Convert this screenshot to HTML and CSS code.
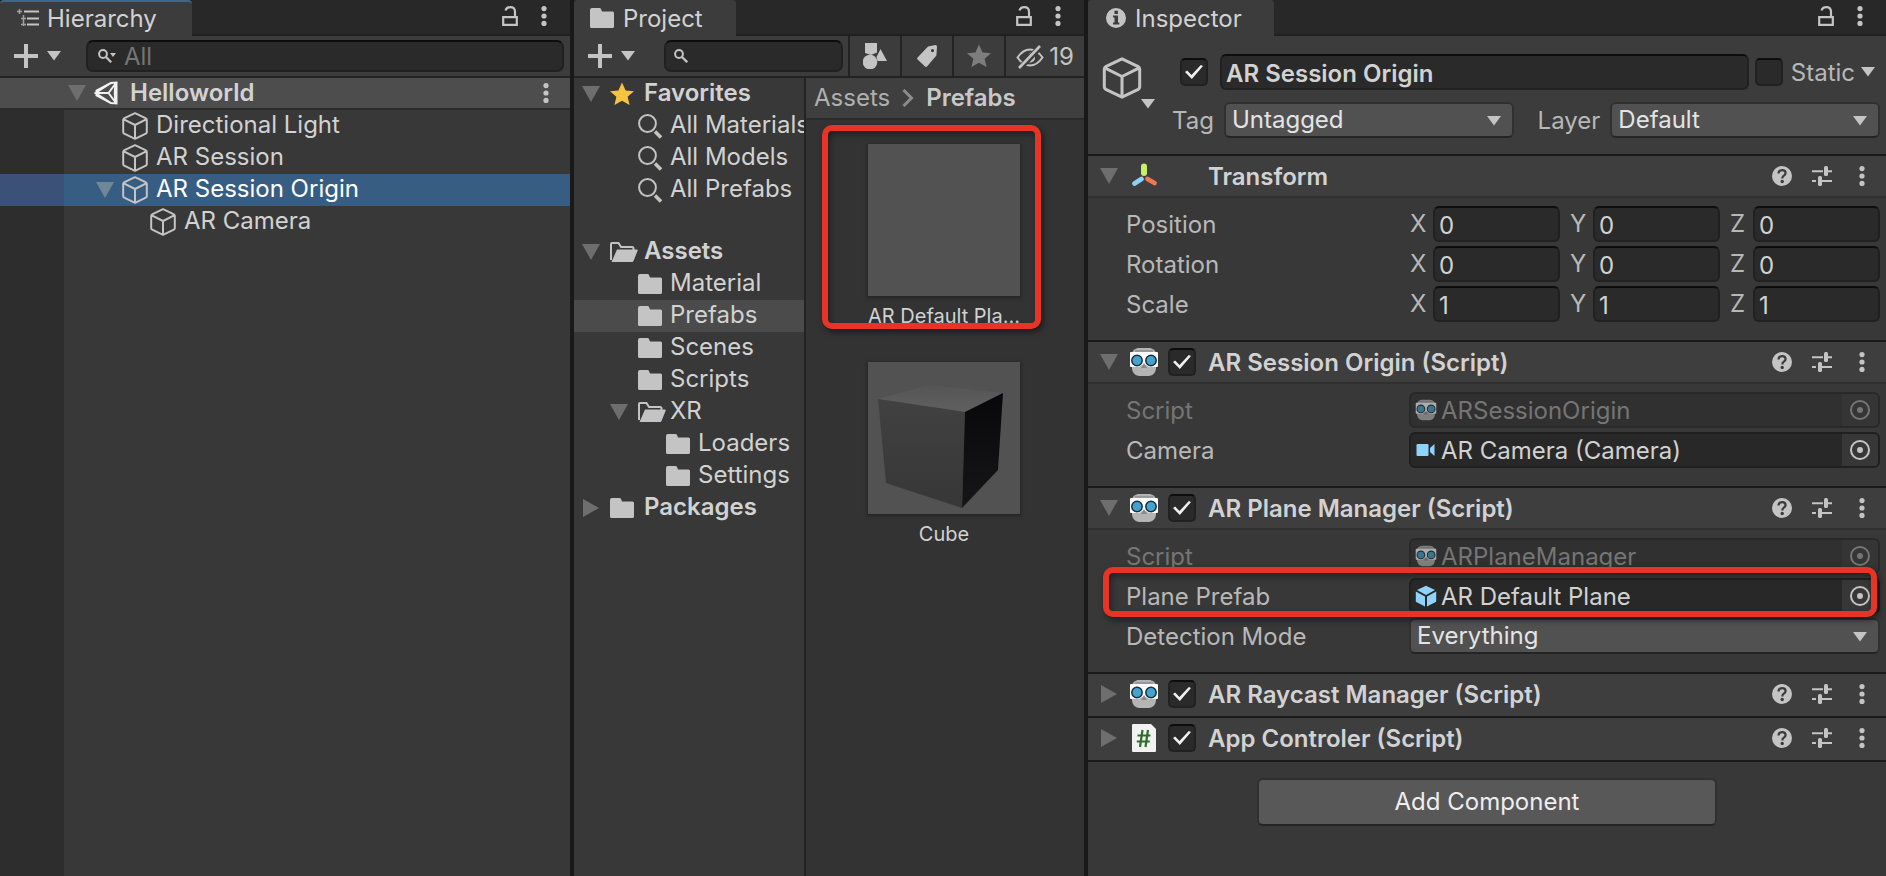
FILE: index.html
```html
<!DOCTYPE html>
<html lang="en">
<head>
<meta charset="utf-8">
<title>Helloworld - Editor</title>
<link rel="stylesheet" href="styles.css">
</head>
<body>
<svg class="sprite" aria-hidden="true">
  <symbol id="lock" viewBox="0 0 16 20"><path d="M1.2 11.2h13.600v7.600H1.200zM3.500 4.600C4 2.600 5.500 1.200 8.300 1.200c3 0 4.700 1.700 4.700 4.500v5.500" fill="none" stroke="currentColor" stroke-width="2.200"/></symbol>
  <symbol id="kebab" viewBox="0 0 6 20"><circle cx="3" cy="2.600" r="2.600"/><circle cx="3" cy="10" r="2.600"/><circle cx="3" cy="17.400" r="2.600"/></symbol>
  <symbol id="plus" viewBox="0 0 24 24"><path d="M10 0h4v10h10v4H14v10h-4V14H0v-4h10z"/></symbol>
  <symbol id="drop" viewBox="0 0 14 10"><path d="M0 0h14L7 9.500z"/></symbol>
  <symbol id="down" viewBox="0 0 18 18"><path d="M0 1h18L9 17z"/></symbol>
  <symbol id="right" viewBox="0 0 18 18"><path d="M1 0v18l16-9z"/></symbol>
  <symbol id="list" viewBox="0 0 22 18"><path d="M2.500 0v5M0 2.500h5M6.500 6v11M4 9.500h5M4 15.500h5" fill="none" stroke="currentColor" stroke-width="1.500" opacity=".75"/><path d="M7 1.500h15v2H7zM10 8.500h12v2H10zM10 14.500h12v2H10z"/></symbol>
  <symbol id="find" viewBox="0 0 14 14"><circle cx="5" cy="5" r="3.900" fill="none" stroke="currentColor" stroke-width="2"/><path d="M8 8l5.200 5.200" stroke="currentColor" stroke-width="2.300"/></symbol>
  <symbol id="finddrop" viewBox="0 0 18 14"><circle cx="5" cy="5" r="3.900" fill="none" stroke="currentColor" stroke-width="2"/><path d="M8 8l5.200 5.200" stroke="currentColor" stroke-width="2.300"/><path d="M12 4h6l-3 4z"/></symbol>
  <symbol id="query" viewBox="0 0 28 28"><circle cx="9.500" cy="11.500" r="8.400" fill="none" stroke="currentColor" stroke-width="2"/><path d="M17 19.500l6 6" stroke="currentColor" stroke-width="3.600"/></symbol>
  <symbol id="cube" viewBox="0 0 26 28"><path d="M13 1.200L23.500 6.200Q24.800 7 24.800 8v12q0 1-1 1.600L13 26.800 2.200 21.600q-1-.6-1-1.600V8q0-1 1.300-1.800zM1.800 7.400L13 13l11.200-5.600M13 13v13.500" fill="none" stroke="currentColor" stroke-width="2" stroke-linejoin="round"/></symbol>
  <symbol id="scene" viewBox="0 0 24 24"><path d="M17 2L2.500 9.500v5L17 22M1.500 12L17 2l5.500-.5v21L17 22zM2 12h12.500M14.500 12L22 2M14.500 12L22 22M22 2q-2.500 10 0 20" fill="none" stroke="#f2f2f2" stroke-width="2"/></symbol>
  <symbol id="folder" viewBox="0 0 28 28"><path d="M2 4h7.500q1 0 1.500 1l1 2.500h10.500q1.500 0 1.500 1.500v13.500q0 1.500-1.500 1.500H1.500Q0 24 0 22.500V6q0-2 2-2z"/></symbol>
  <symbol id="openfolder" viewBox="0 0 28 28"><path d="M1 22V6q0-1 1-1h6.500l2.500 4h11q1.500 0 1.500 1.500v2" fill="none" stroke="currentColor" stroke-width="2"/><path d="M7 11.500h20q1 0 .6 1.200l-4 10q-.5 1.300-1.600 1.300H1.500z"/></symbol>
  <symbol id="star" viewBox="0 0 28 28"><path d="M12 2.500l3.600 7.900 8.400.8-6.400 5.600 2 8.200L12 20.700 4.400 25l2-8.200L0 11.200l8.400-.8z"/></symbol>
  <symbol id="shapes" viewBox="0 0 24 26"><path d="M2 0h12v9.500L8 12 2 10zM17.500 6L24 18h-9.500l-1-4z"/><circle cx="7" cy="19" r="7.300"/></symbol>
  <symbol id="tag" viewBox="0 0 20 22"><path d="M11 1.500L18.500 0Q20 0 20 2l-.6 8.500L10 21.500q-1 .8-2 0L.6 14.500q-1-1 0-2zM15.500 4a1.600 1.600 0 1 0 0 3.200 1.600 1.600 0 0 0 0-3.200z" fill-rule="evenodd"/></symbol>
  <symbol id="eye" viewBox="0 0 28 24"><path d="M1.500 12.500Q7 4.500 14 4.500t12.500 8Q21 20.500 14 20.500T1.500 12.500z" fill="none" stroke="currentColor" stroke-width="2"/><path d="M14 7.500a5 5 0 0 1 5 5 5 5 0 0 1-9 3z"/><path d="M3.500 23.500L24 2" stroke="#3c3c3c" stroke-width="6"/><path d="M3 23L24 1" stroke="currentColor" stroke-width="2.600"/></symbol>
  <symbol id="info" viewBox="0 0 20 20"><circle cx="10" cy="10" r="10"/><path d="M8.500 2.800h3.400V6H8.500zM7 7.500h5v7h1.300v2H7v-2h1.500v-5H7z" fill="#3c3c3c"/></symbol>
  <symbol id="help" viewBox="0 0 20 20"><circle cx="10" cy="10" r="10"/><path d="M6.500 7.500q0-3.300 3.600-3.300 3.500 0 3.500 2.900 0 1.500-1.700 2.600-1.600 1-1.600 2.800" fill="none" stroke="#3c3c3c" stroke-width="2.200"/><circle cx="10.200" cy="15.500" r="1.700" fill="#3c3c3c"/></symbol>
  <symbol id="sliders" viewBox="0 0 20 20"><path d="M0 4.200h11v2H0zM16 4.200h4v2h-4zM0 14h4v2H0zM9 14h11v2H9z"/><rect x="12" y="0" width="4" height="10" rx="1.500"/><rect x="6" y="10" width="4" height="10" rx="1.500"/></symbol>
  <symbol id="axes" viewBox="0 0 30 28"><path d="M15 4.500v6.500" stroke="#c6f06a" stroke-width="6" stroke-linecap="round"/><path d="M12.500 17L5.500 21.500" stroke="#8fd0f4" stroke-width="4.800" stroke-linecap="round"/><path d="M18.500 17l7 4" stroke="#ec7750" stroke-width="4.800" stroke-linecap="round"/></symbol>
  <symbol id="goggles" viewBox="0 0 30 28"><path d="M9 0h12q5 1 6 5v16q-1 6-7 7H10q-6-1-7-7V5q1-4 6-5z" fill="#b4b4b4"/><path d="M6 3h18" stroke="#7c7c7c"/><path d="M1 5q0-1 1-1h26q1 0 1 1v13q0 1-1 1h-8l-3-2h-4l-3 2H2q-1 0-1-1z" fill="#fff"/><path d="M15 15l3 5h-6z" fill="#8a8a8a"/><circle cx="8" cy="12.500" r="5.200" fill="#44a2cc" stroke="#163040" stroke-width="1.500"/><circle cx="22" cy="12.500" r="5.200" fill="#44a2cc" stroke="#163040" stroke-width="1.500"/></symbol>
  <symbol id="script" viewBox="0 0 30 28"><path d="M3 1q0-1 1-1h18l5 5v22q0 1-1 1H4q-1 0-1-1z" fill="#f2f2f2"/><path d="M13.500 6l-2.500 17M19 6l-2.500 17M8.500 11.500h13M7.800 17.500h13" stroke="#2f6b2f" stroke-width="2.200"/></symbol>
  <symbol id="camera" viewBox="0 0 22 22"><path d="M2.500 5h10q1 0 1 1v10q0 1-1 1h-10q-1 0-1-1V6q0-1 1-1zM15 9l4.500-4v12L15 13z" fill="#8fd3fb"/></symbol>
  <symbol id="prefab" viewBox="0 0 22 22"><path d="M11 .8l9 4.300-9 4.800-9-4.800zM.8 6.600l9.200 5v9.900l-9.200-4.700zM21.200 6.600l-9.200 5v9.900l9.200-4.700z" fill="#8fd3fb"/></symbol>
  <symbol id="target" viewBox="0 0 20 20"><circle cx="10" cy="10" r="9" fill="none" stroke="currentColor" stroke-width="2"/><circle cx="10" cy="10" r="3"/></symbol>
  <symbol id="chevron" viewBox="0 0 12 18"><path d="M1.500 1l8 8-8 8" fill="none" stroke="#8c8c8c" stroke-width="3"/></symbol>
</svg>

<main class="editor">
  <section class="panel hierarchy">
    <header class="tabs">
      <h2 class="tab focused"><svg class="i-list"><use href="#list"/></svg><span>Hierarchy</span></h2>
      <button class="plain lock" aria-label="Lock"><svg><use href="#lock"/></svg></button>
      <button class="plain kebab" aria-label="Menu"><svg><use href="#kebab"/></svg></button>
    </header>
    <div class="toolbar">
      <button class="plain add" aria-label="Create"><svg class="i-plus"><use href="#plus"/></svg><svg class="i-drop"><use href="#drop"/></svg></button>
      <label class="search"><svg class="i-finddrop"><use href="#finddrop"/></svg><input type="text" placeholder="All" aria-label="Search hierarchy"></label>
    </div>
    <div class="scene">
      <svg class="fold"><use href="#down"/></svg><svg class="i-scene"><use href="#scene"/></svg><strong>Helloworld</strong>
      <button class="plain kebab" aria-label="Scene menu"><svg><use href="#kebab"/></svg></button>
    </div>
    <ul class="objects">
      <li><i class="fold"></i><svg class="i-cube"><use href="#cube"/></svg><span>Directional Light</span></li>
      <li><i class="fold"></i><svg class="i-cube"><use href="#cube"/></svg><span>AR Session</span></li>
      <li class="selected"><svg class="fold"><use href="#down"/></svg><svg class="i-cube"><use href="#cube"/></svg><span>AR Session Origin</span></li>
      <li class="child"><i class="fold"></i><svg class="i-cube"><use href="#cube"/></svg><span>AR Camera</span></li>
    </ul>
  </section>

  <section class="panel project">
    <header class="tabs">
      <h2 class="tab"><svg class="i-tabfolder"><use href="#folder"/></svg><span>Project</span></h2>
      <button class="plain lock" aria-label="Lock"><svg><use href="#lock"/></svg></button>
      <button class="plain kebab" aria-label="Menu"><svg><use href="#kebab"/></svg></button>
    </header>
    <div class="toolbar">
      <button class="plain add" aria-label="Create"><svg class="i-plus"><use href="#plus"/></svg><svg class="i-drop"><use href="#drop"/></svg></button>
      <label class="search"><svg class="i-find"><use href="#find"/></svg><input type="text" aria-label="Search project"></label>
      <button class="tool" aria-label="Search by type"><svg class="i-shapes"><use href="#shapes"/></svg></button>
      <button class="tool" aria-label="Search by label"><svg class="i-tag"><use href="#tag"/></svg></button>
      <button class="tool dim" aria-label="Save search"><svg class="i-star"><use href="#star"/></svg></button>
      <button class="tool hidden-count"><svg class="i-eye"><use href="#eye"/></svg>19</button>
    </div>
    <div class="browser">
      <ul class="tree">
        <li class="root"><svg class="fold"><use href="#down"/></svg><svg class="icon gold"><use href="#star"/></svg><span>Favorites</span></li>
        <li class="l1"><i class="fold"></i><svg class="icon"><use href="#query"/></svg><span>All Materials</span></li>
        <li class="l1"><i class="fold"></i><svg class="icon"><use href="#query"/></svg><span>All Models</span></li>
        <li class="l1"><i class="fold"></i><svg class="icon"><use href="#query"/></svg><span>All Prefabs</span></li>
        <li class="root spaced"><svg class="fold"><use href="#down"/></svg><svg class="icon"><use href="#openfolder"/></svg><span>Assets</span></li>
        <li class="l1"><i class="fold"></i><svg class="icon"><use href="#folder"/></svg><span>Material</span></li>
        <li class="l1 current"><i class="fold"></i><svg class="icon"><use href="#folder"/></svg><span>Prefabs</span></li>
        <li class="l1"><i class="fold"></i><svg class="icon"><use href="#folder"/></svg><span>Scenes</span></li>
        <li class="l1"><i class="fold"></i><svg class="icon"><use href="#folder"/></svg><span>Scripts</span></li>
        <li class="l1"><svg class="fold"><use href="#down"/></svg><svg class="icon"><use href="#openfolder"/></svg><span>XR</span></li>
        <li class="l2"><i class="fold"></i><svg class="icon"><use href="#folder"/></svg><span>Loaders</span></li>
        <li class="l2"><i class="fold"></i><svg class="icon"><use href="#folder"/></svg><span>Settings</span></li>
        <li class="root"><svg class="fold"><use href="#right"/></svg><svg class="icon"><use href="#folder"/></svg><span>Packages</span></li>
      </ul>
      <div class="contents">
        <nav class="crumbs"><a href="#">Assets</a><svg><use href="#chevron"/></svg><strong>Prefabs</strong></nav>
        <div class="assets">
          <figure class="asset">
            <div class="thumb"></div>
            <figcaption>AR Default Pla...</figcaption>
            <div class="mark mark-asset"></div>
          </figure>
          <figure class="asset">
            <div class="thumb">
              <svg viewBox="0 0 152 152">
                <defs>
                  <linearGradient id="top" x1="0" y1="0" x2="0" y2="1"><stop offset="0" stop-color="#555"/><stop offset="1" stop-color="#606060"/></linearGradient>
                  <linearGradient id="front" x1="0" y1="0" x2="0" y2="1"><stop offset="0" stop-color="#414141"/><stop offset="1" stop-color="#373737"/></linearGradient>
                  <linearGradient id="side" x1="0" y1="0" x2="0" y2="1"><stop offset="0" stop-color="#08080a"/><stop offset="1" stop-color="#16161a"/></linearGradient>
                </defs>
                <path d="M10 37l51-14 74 8-38 19z" fill="url(#top)"/>
                <path d="M10 37l87 13-3 96-76-25z" fill="url(#front)"/>
                <path d="M97 50l38-19-5 77-36 38z" fill="url(#side)"/>
              </svg>
            </div>
            <figcaption>Cube</figcaption>
          </figure>
        </div>
      </div>
    </div>
  </section>

  <section class="panel inspector">
    <header class="tabs">
      <h2 class="tab"><svg class="i-info"><use href="#info"/></svg><span>Inspector</span></h2>
      <button class="plain lock" aria-label="Lock"><svg><use href="#lock"/></svg></button>
      <button class="plain kebab" aria-label="Menu"><svg><use href="#kebab"/></svg></button>
    </header>
    <div class="object">
      <button class="plain object-icon" aria-label="Icon"><svg class="i-bigcube"><use href="#cube"/></svg><svg class="i-drop"><use href="#drop"/></svg></button>
      <div class="object-rows">
        <div class="object-row">
          <input type="checkbox" class="check" aria-label="Active" checked>
          <input type="text" class="field name" aria-label="Name" value="AR Session Origin">
          <input type="checkbox" class="check" id="static">
          <label class="static" for="static">Static</label>
          <svg class="i-drop"><use href="#drop"/></svg>
        </div>
        <div class="object-row second">
          <label for="tag-select">Tag</label>
          <div class="select tag-box"><select id="tag-select"><option>Untagged</option></select><svg class="i-drop"><use href="#drop"/></svg></div>
          <label class="layer" for="layer-select">Layer</label>
          <div class="select layer-box"><select id="layer-select"><option>Default</option></select><svg class="i-drop"><use href="#drop"/></svg></div>
        </div>
      </div>
    </div>

    <section class="component">
      <header><svg class="fold"><use href="#down"/></svg><svg class="i-comp"><use href="#axes"/></svg><i class="check-gap"></i><h3>Transform</h3>
        <button class="plain" aria-label="Help"><svg class="i-20"><use href="#help"/></svg></button><button class="plain" aria-label="Presets"><svg class="i-20"><use href="#sliders"/></svg></button><button class="plain kebab" aria-label="Menu"><svg><use href="#kebab"/></svg></button></header>
      <div class="props">
        <div class="prop"><span>Position</span><div class="vector"><label>X<input class="field" type="text" value="0"></label><label>Y<input class="field" type="text" value="0"></label><label>Z<input class="field" type="text" value="0"></label></div></div>
        <div class="prop"><span>Rotation</span><div class="vector"><label>X<input class="field" type="text" value="0"></label><label>Y<input class="field" type="text" value="0"></label><label>Z<input class="field" type="text" value="0"></label></div></div>
        <div class="prop"><span>Scale</span><div class="vector"><label>X<input class="field" type="text" value="1"></label><label>Y<input class="field" type="text" value="1"></label><label>Z<input class="field" type="text" value="1"></label></div></div>
      </div>
    </section>

    <section class="component">
      <header><svg class="fold"><use href="#down"/></svg><svg class="i-comp"><use href="#goggles"/></svg><input type="checkbox" class="check" aria-label="Enabled" checked><h3>AR Session Origin (Script)</h3>
        <button class="plain" aria-label="Help"><svg class="i-20"><use href="#help"/></svg></button><button class="plain" aria-label="Presets"><svg class="i-20"><use href="#sliders"/></svg></button><button class="plain kebab" aria-label="Menu"><svg><use href="#kebab"/></svg></button></header>
      <div class="props">
        <div class="prop disabled"><span>Script</span><div class="ref"><svg class="i-22"><use href="#goggles"/></svg><span>ARSessionOrigin</span><button class="pick" aria-label="Pick script" disabled><svg class="i-20"><use href="#target"/></svg></button></div></div>
        <div class="prop"><span>Camera</span><div class="ref"><svg class="i-22"><use href="#camera"/></svg><span>AR Camera (Camera)</span><button class="pick" aria-label="Pick camera"><svg class="i-20"><use href="#target"/></svg></button></div></div>
      </div>
    </section>

    <section class="component">
      <header><svg class="fold"><use href="#down"/></svg><svg class="i-comp"><use href="#goggles"/></svg><input type="checkbox" class="check" aria-label="Enabled" checked><h3>AR Plane Manager (Script)</h3>
        <button class="plain" aria-label="Help"><svg class="i-20"><use href="#help"/></svg></button><button class="plain" aria-label="Presets"><svg class="i-20"><use href="#sliders"/></svg></button><button class="plain kebab" aria-label="Menu"><svg><use href="#kebab"/></svg></button></header>
      <div class="props">
        <div class="prop disabled"><span>Script</span><div class="ref"><svg class="i-22"><use href="#goggles"/></svg><span>ARPlaneManager</span><button class="pick" aria-label="Pick script" disabled><svg class="i-20"><use href="#target"/></svg></button></div></div>
        <div class="prop"><span>Plane Prefab</span><div class="ref"><svg class="i-22"><use href="#prefab"/></svg><span>AR Default Plane</span><button class="pick" aria-label="Pick prefab"><svg class="i-20"><use href="#target"/></svg></button></div><div class="mark mark-prop"></div></div>
        <div class="prop"><label for="detection">Detection Mode</label><div class="select"><select id="detection"><option>Everything</option></select><svg class="i-drop"><use href="#drop"/></svg></div></div>
      </div>
    </section>

    <section class="component closed">
      <header><svg class="fold"><use href="#right"/></svg><svg class="i-comp"><use href="#goggles"/></svg><input type="checkbox" class="check" aria-label="Enabled" checked><h3>AR Raycast Manager (Script)</h3>
        <button class="plain" aria-label="Help"><svg class="i-20"><use href="#help"/></svg></button><button class="plain" aria-label="Presets"><svg class="i-20"><use href="#sliders"/></svg></button><button class="plain kebab" aria-label="Menu"><svg><use href="#kebab"/></svg></button></header>
    </section>
    <section class="component closed">
      <header><svg class="fold"><use href="#right"/></svg><svg class="i-comp"><use href="#script"/></svg><input type="checkbox" class="check" aria-label="Enabled" checked><h3>App Controler (Script)</h3>
        <button class="plain" aria-label="Help"><svg class="i-20"><use href="#help"/></svg></button><button class="plain" aria-label="Presets"><svg class="i-20"><use href="#sliders"/></svg></button><button class="plain kebab" aria-label="Menu"><svg><use href="#kebab"/></svg></button></header>
    </section>
    <footer class="inspector-foot"><button class="add-component">Add Component</button></footer>
  </section>
</main>
</body>
</html>
```
FILE: styles.css
```css
* { box-sizing: border-box; }
body {
  margin: 0;
  background: #191919;
  color: #d2d2d2;
  font: 24px/32px Inter, "Liberation Sans", sans-serif;
}
h2, h3, ul, figure { margin: 0; padding: 0; font-size: inherit; font-weight: 400; }
ul { list-style: none; }
svg { display: block; fill: currentColor; flex: none; }
input, select, button { font: inherit; color: inherit; margin: 0; border-radius: 0; }
.sprite { position: absolute; width: 0; height: 0; }
.plain { background: none; border: 0; padding: 0; color: #c4c4c4; flex: none; }
strong, .root, h3 { font-weight: 600; }

.editor {
  display: grid;
  grid-template-columns: 570fr 510fr 798fr;
  gap: 4px;
  min-height: 100vh;
}
.panel { background: #383838; min-width: 0; display: flex; flex-direction: column; }

/* tab strip */
.tabs {
  display: flex;
  align-items: center;
  height: 36px;
  background: #282828;
  box-shadow: inset 0 -2px #202020;
  padding-right: 23px;
}
.tab {
  display: flex;
  align-items: center;
  height: 36px;
  background: #3c3c3c;
  border-radius: 4px 4px 0 0;
  margin-right: auto;
}
.tab span { padding-top: 2px; }
.hierarchy .tab { width: 192px; padding-left: 17px; gap: 8px; }
.project .tab { width: 162px; padding-left: 16px; gap: 7px; }
.inspector .tab { width: 186px; padding-left: 18px; gap: 9px; }
.hierarchy .focused { padding-bottom: 2px; border-top: 2px solid #3a6690; }
.lock svg { width: 16px; height: 20px; }
.lock { margin-right: 23px; padding-bottom: 4px; }
.kebab svg { width: 6px; height: 20px; }
.tabs .kebab { padding-bottom: 4px; }

/* toolbars */
.toolbar {
  display: flex;
  align-items: center;
  height: 42px;
  background: #3c3c3c;
  border-bottom: 2px solid #232323;
}
.add { display: flex; align-items: center; gap: 9px; padding-left: 14px; }
.search {
  flex: 1;
  min-width: 0;
  display: flex;
  align-items: center;
  gap: 8px;
  height: 32px;
  margin: 0 6px 0 25px;
  padding-left: 10px;
  background: #2a2a2a;
  border: 2px solid #212121;
  border-top-color: #0d0d0d;
  border-radius: 7px;
  color: #c4c4c4;
}
.project .search { margin: 0 5px 0 29px; padding-left: 8px; }
.search input { flex: 1; min-width: 0; height: 28px; padding: 2px 0 0; border: 0; background: none; outline: 0; }
.search input::placeholder { color: #757575; opacity: 1; }
.tool {
  display: flex;
  align-items: center;
  justify-content: center;
  gap: 5px;
  width: 52px;
  height: 40px;
  padding: 0;
  border: 0;
  border-left: 2px solid #232323;
  background: #3c3c3c;
  color: #c4c4c4;
}
.tool.dim { color: #7d7d7d; }
.tool.hidden-count { width: 80px; padding-top: 2px; }

.i-list { width: 22px; height: 18px; color: #c4c4c4; }
.i-tabfolder { width: 28px; height: 28px; margin-right: -2px; color: #c4c4c4; }
.i-info { width: 20px; height: 20px; color: #c4c4c4; }
.i-plus { width: 24px; height: 24px; }
.i-drop { width: 14px; height: 10px; color: #c4c4c4; }
.i-find { width: 14px; height: 14px; }
.i-finddrop { width: 18px; height: 14px; }
.i-shapes { width: 24px; height: 26px; }
.i-tag { width: 20px; height: 22px; }
.i-star { width: 28px; height: 28px; margin-right: -4px; }
.i-eye { width: 28px; height: 24px; }
.i-scene { width: 24px; height: 24px; }
.i-cube { width: 26px; height: 28px; color: #c4c4c4; }
.i-bigcube { width: 40px; height: 42px; }
.i-20 { width: 20px; height: 20px; }
.i-22 { width: 22px; height: 22px; }
.i-comp { width: 30px; height: 28px; }
.fold { width: 18px; height: 18px; flex: none; color: #6e6e6e; }

/* hierarchy */
.scene {
  display: flex;
  align-items: center;
  gap: 8px;
  height: 32px;
  padding: 0 21px 0 68px;
  background: #4d4d4d;
  border-bottom: 2px solid #2c2c2c;
}
.scene strong { margin-right: auto; padding-left: 4px; }
.objects { flex: 1; background: linear-gradient(to right, #2d2d2d 64px, #383838 64px); }
.objects li { display: flex; align-items: center; gap: 8px; height: 32px; padding-left: 96px; white-space: nowrap; }
.objects span, .tree span { padding-bottom: 2px; }
.objects .child { padding-left: 124px; }
.objects .selected { color: #fff; background: linear-gradient(to right, #3c5178 64px, #385d82 64px); }
.selected .fold { color: #6f8799; }

/* project */
.browser { flex: 1; display: grid; grid-template-columns: 232fr 278fr; }
.tree { border-right: 2px solid #232323; overflow: hidden; min-width: 0; }
.tree li { display: flex; align-items: center; height: 32px; padding-left: 8px; white-space: nowrap; }
.tree .icon { width: 28px; height: 28px; margin: 0 4px 0 10px; color: #c4c4c4; }
.tree .root .icon { margin-right: 6px; }
.tree .gold { color: #f8c440; }
.tree .l1 { padding-left: 36px; }
.tree .l2 { padding-left: 64px; }
.tree .spaced { margin-top: 30px; }
.tree .current { background: #4b4b4b; }
.contents { background: #333; min-width: 0; }
.crumbs {
  display: flex;
  align-items: center;
  gap: 12px;
  height: 42px;
  padding-left: 8px;
  background: #3f3f3f;
  border-bottom: 2px solid #2a2a2a;
}
.crumbs a { color: #b0b0b0; text-decoration: none; }
.crumbs svg { width: 12px; height: 18px; }
.crumbs strong { color: #c8c8c8; }
.assets { display: flex; flex-direction: column; align-items: center; gap: 26px; padding: 24px 2px 0 0; }
.asset { position: relative; width: 152px; text-align: center; font-size: 20px; line-height: 40px; white-space: nowrap; }
.thumb { height: 152px; background: #525252; box-shadow: 0 1px 3px 1px #252525; }
.mark {
  position: absolute;
  z-index: 1;
  border: 6px solid #e83426;
  border-radius: 10px;
  box-shadow: 2px 3px 6px rgba(0, 0, 0, .5), inset 2px 3px 6px rgba(0, 0, 0, .4);
  pointer-events: none;
}
.mark-asset { inset: -19px -21px 7px -46px; }
.mark-prop { inset: -11px 9px -3px 15px; }

/* inspector: object header */
.object { display: flex; padding: 18px 6px 16px 14px; background: #3c3c3c; color: #b8b8b8; }
.object-icon { width: 53px; height: 53px; padding-top: 3px; }
.object-icon .i-drop { margin: 0 0 0 39px; }
.object-rows { flex: 1; min-width: 0; }
.object-row { display: flex; align-items: center; height: 36px; padding: 0 5px 0 25px; }
.object-row.second { margin-top: 12px; padding: 0 0 0 17px; }
.object-row label { padding-top: 2px; }
.field {
  min-width: 0;
  height: 36px;
  padding: 2px 6px 0;
  background: #2a2a2a;
  border: 2px solid #212121;
  border-top-color: #0d0d0d;
  border-radius: 6px;
  color: #d2d2d2;
}
.name { flex: 1; margin: 0 6px 0 12px; padding: 2px 4px 0; font-weight: 600; }
.check {
  appearance: none;
  display: grid;
  place-items: center;
  flex: none;
  width: 28px;
  height: 28px;
  background: #2a2a2a;
  border: 2px solid #212121;
  border-top-color: #0d0d0d;
  border-radius: 5px;
}
.check:checked::before {
  content: "";
  width: 18px;
  height: 14px;
  background: #f0f0f0;
  clip-path: polygon(0 50%, 12% 40%, 36% 72%, 88% 0, 100% 8%, 38% 100%);
}
.static { margin: 0 6px 0 8px; }
.layer { margin-left: 24px; }
.select { position: relative; }
.select select {
  appearance: none;
  width: 100%;
  height: 36px;
  padding: 0 6px;
  display: block;
  background: #515151;
  border: 2px solid #303030;
  border-bottom-color: #242424;
  border-radius: 6px;
  color: #e4e4e4;
}
.select .i-drop { position: absolute; right: 13px; top: 14px; pointer-events: none; }
.tag-box { flex: 290; margin-left: 10px; }
.layer-box { flex: 270; margin-left: 10px; }

/* inspector: components */
.component { border-top: 2px solid #1a1a1a; }
.component > header {
  display: flex;
  align-items: center;
  height: 42px;
  padding: 0 21px 0 12px;
  background: #3e3e3e;
  border-bottom: 2px solid #303030;
}
.component > header .i-comp { margin: 0 9px 0 11px; }
.component > header .plain { margin-left: 20px; }
.component > header .kebab { margin-left: 27px; }
.component h3 { margin: 0 auto 0 12px; padding-top: 2px; white-space: nowrap; }
.check-gap { width: 28px; }
.closed > header { padding-bottom: 2px; border-bottom: 0; }
.closed:last-of-type { border-bottom: 2px solid #1a1a1a; }
.props { display: grid; gap: 4px; padding: 8px 0 18px; }
.prop {
  position: relative;
  display: grid;
  grid-template-columns: 283fr 471fr;
  align-items: center;
  padding: 0 6px 0 38px;
  color: #b8b8b8;
}
.prop > span, .prop > label, .ref > span { padding-top: 2px; }
.vector { display: grid; grid-template-columns: repeat(3, 1fr); gap: 9px; }
.vector label { display: grid; grid-template-columns: 23px 1fr; align-items: center; padding-left: 1px; }
.vector .field { width: 100%; padding: 2px 4px 0; }
.ref {
  display: flex;
  align-items: center;
  gap: 4px;
  height: 36px;
  padding-left: 4px;
  background: #282828;
  border: 2px solid #202020;
  border-radius: 6px;
  color: #d2d2d2;
  white-space: nowrap;
}
.pick {
  display: grid;
  place-items: center;
  width: 36px;
  height: 32px;
  margin-left: auto;
  padding: 0;
  border: 0;
  border-radius: 0 4px 4px 0;
  background: #373737;
  color: #c4c4c4;
}
.disabled { color: #757575; }
.disabled .ref { background: #303030; border-color: #292929; color: #757575; }
.disabled .i-22 { opacity: .6; }
.disabled .pick { background: #353535; color: #757575; }

.inspector-foot { display: flex; justify-content: center; padding-top: 16px; }
.add-component {
  width: 460px;
  height: 48px;
  padding: 0;
  background: #585858;
  border: 2px solid #303030;
  border-bottom-color: #242424;
  border-radius: 6px;
  color: #eee;
}
```
